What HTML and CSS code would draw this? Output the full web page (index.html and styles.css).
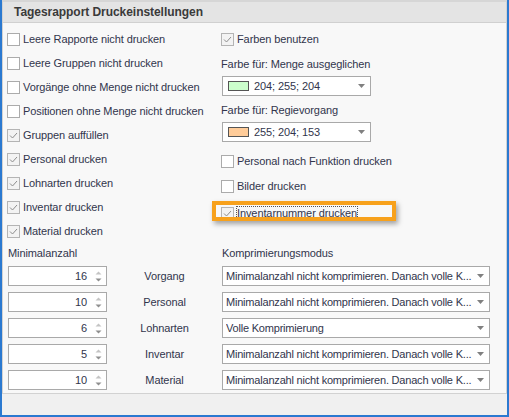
FILE: index.html
```html
<!DOCTYPE html>
<html>
<head>
	<meta charset="utf-8">
	<title>Tagesrapport Druckeinstellungen</title>
	<link rel="stylesheet" href="styles.css">
</head>
<body>
<div class="window">
	<div class="group">
		<div class="group-head">Tagesrapport Druckeinstellungen</div>
		<div class="group-body">

			<div class="options">
				<div class="col left">
					<label class="chk"><span class="box"></span>Leere Rapporte nicht drucken</label>
					<label class="chk"><span class="box"></span>Leere Gruppen nicht drucken</label>
					<label class="chk"><span class="box"></span>Vorgänge ohne Menge nicht drucken</label>
					<label class="chk"><span class="box"></span>Positionen ohne Menge nicht drucken</label>
					<label class="chk on"><span class="box"><svg viewBox="0 0 11 11"><polyline points="2,5.5 4.5,8 9,3"/></svg></span>Gruppen auffüllen</label>
					<label class="chk on"><span class="box"><svg viewBox="0 0 11 11"><polyline points="2,5.5 4.5,8 9,3"/></svg></span>Personal drucken</label>
					<label class="chk on"><span class="box"><svg viewBox="0 0 11 11"><polyline points="2,5.5 4.5,8 9,3"/></svg></span>Lohnarten drucken</label>
					<label class="chk on"><span class="box"><svg viewBox="0 0 11 11"><polyline points="2,5.5 4.5,8 9,3"/></svg></span>Inventar drucken</label>
					<label class="chk on"><span class="box"><svg viewBox="0 0 11 11"><polyline points="2,5.5 4.5,8 9,3"/></svg></span>Material drucken</label>
				</div>

				<div class="col right">
					<label class="chk on"><span class="box"><svg viewBox="0 0 11 11"><polyline points="2,5.5 4.5,8 9,3"/></svg></span>Farben benutzen</label>

					<div class="cap first">Farbe für: Menge ausgeglichen</div>
					<div class="combo color">
						<span class="swatch green"></span><span class="val">204; 255; 204</span>
						<svg class="arrow" viewBox="0 0 7 4"><polygon points="0,0 7,0 3.5,4"/></svg>
					</div>

					<div class="cap">Farbe für: Regievorgang</div>
					<div class="combo color">
						<span class="swatch orange"></span><span class="val">255; 204; 153</span>
						<svg class="arrow" viewBox="0 0 7 4"><polygon points="0,0 7,0 3.5,4"/></svg>
					</div>

					<label class="chk funk"><span class="box"></span>Personal nach Funktion drucken</label>
					<label class="chk pics"><span class="box"></span>Bilder drucken</label>
					<label class="chk on inv"><span class="box"><svg viewBox="0 0 11 11"><polyline points="2,5.5 4.5,8 9,3"/></svg></span><span class="focus">Inventarnummer drucken</span></label>
				</div>
			</div>

			<div class="limits">
				<div class="lim-head">Minimalanzahl</div>
				<div></div>
				<div class="lim-head">Komprimierungsmodus</div>

				<div class="spin"><span class="num">16</span><svg class="updown" viewBox="0 0 7 13"><polygon class="up" points="0.5,4.5 3.5,1.5 6.5,4.5"/><polygon class="down" points="0.5,8.5 6.5,8.5 3.5,11.5"/></svg></div>
				<div class="what">Vorgang</div>
				<div class="combo wide"><span class="val">Minimalanzahl nicht komprimieren. Danach volle K...</span><svg class="arrow" viewBox="0 0 7 4"><polygon points="0,0 7,0 3.5,4"/></svg></div>

				<div class="spin"><span class="num">10</span><svg class="updown" viewBox="0 0 7 13"><polygon class="up" points="0.5,4.5 3.5,1.5 6.5,4.5"/><polygon class="down" points="0.5,8.5 6.5,8.5 3.5,11.5"/></svg></div>
				<div class="what">Personal</div>
				<div class="combo wide"><span class="val">Minimalanzahl nicht komprimieren. Danach volle K...</span><svg class="arrow" viewBox="0 0 7 4"><polygon points="0,0 7,0 3.5,4"/></svg></div>

				<div class="spin"><span class="num">6</span><svg class="updown" viewBox="0 0 7 13"><polygon class="up" points="0.5,4.5 3.5,1.5 6.5,4.5"/><polygon class="down" points="0.5,8.5 6.5,8.5 3.5,11.5"/></svg></div>
				<div class="what">Lohnarten</div>
				<div class="combo wide"><span class="val">Volle Komprimierung</span><svg class="arrow" viewBox="0 0 7 4"><polygon points="0,0 7,0 3.5,4"/></svg></div>

				<div class="spin"><span class="num">5</span><svg class="updown" viewBox="0 0 7 13"><polygon class="up" points="0.5,4.5 3.5,1.5 6.5,4.5"/><polygon class="down" points="0.5,8.5 6.5,8.5 3.5,11.5"/></svg></div>
				<div class="what">Inventar</div>
				<div class="combo wide"><span class="val">Minimalanzahl nicht komprimieren. Danach volle K...</span><svg class="arrow" viewBox="0 0 7 4"><polygon points="0,0 7,0 3.5,4"/></svg></div>

				<div class="spin"><span class="num">10</span><svg class="updown" viewBox="0 0 7 13"><polygon class="up" points="0.5,4.5 3.5,1.5 6.5,4.5"/><polygon class="down" points="0.5,8.5 6.5,8.5 3.5,11.5"/></svg></div>
				<div class="what">Material</div>
				<div class="combo wide"><span class="val">Minimalanzahl nicht komprimieren. Danach volle K...</span><svg class="arrow" viewBox="0 0 7 4"><polygon points="0,0 7,0 3.5,4"/></svg></div>
			</div>

		</div>
	</div>
	<div class="marker"></div>
</div>
</body>
</html>
```

FILE: styles.css
```css
* {
	box-sizing: border-box;
}
body {
	margin: 0px;
	background: #f0f0f0;
	font-family: 'Liberation Sans', Arial, sans-serif;
	font-size: 11px;
	letter-spacing: -0.1px;
	color: #31354c;
}
.window {
	position: relative;
	width: 509px;
	height: 417px;
	background: #f0f0f0;
	border-left: 2px solid #2b79d0;
	border-right: 2px solid #2b79d0;
	border-bottom: 2px solid #2b79d0;
}
.group {
	border: 1px solid #d2d2d2;
	border-top: 2px solid #d6d6d6;
	background: #f8f8f8;
}
.group-head {
	height: 21px;
	background: #e4e4e4;
	border-bottom: 1px solid #d0d0d0;
	padding: 3px 0 0 11px;
	font-weight: bold;
	font-size: 12px;
	letter-spacing: -0.05px;
	color: #3a3a3a;
}
.group-body {
	height: 370px;
	padding: 4px 0 0 4px;
}

/* upper part: two columns of options */
.options {
	display: flex;
}
.col {
	display: flex;
	flex-direction: column;
}
.col.left {
	width: 214px;
}
.chk {
	display: flex;
	align-items: center;
	height: 24px;
	white-space: nowrap;
}
.chk .box {
	width: 13px;
	height: 13px;
	margin-right: 3px;
	border: 1px solid #ababab;
	background: #fff;
	display: flex;
}
.chk.on .box {
	background: #f3f3f3;
	border-color: #b4b4b4;
}
.chk .box svg {
	width: 11px;
	height: 11px;
}
.chk .box polyline {
	fill: none;
	stroke: #8e8e8e;
	stroke-width: 1;
}
.cap {
	height: 16px;
	line-height: 16px;
	margin-top: 6px;
}
.cap.first {
	margin-top: 5px;
}
.chk.funk {
	margin-top: 7px;
}
.chk.pics {
	margin-top: 1px;
}
.chk.inv {
	margin-top: 3px;
}
.focus {
	outline: 1px dotted #555;
	line-height: 13px;
}

/* combo boxes */
.combo {
	display: flex;
	align-items: center;
	height: 20px;
	background: #fff;
	border: 1px solid #a9a9a9;
	margin-top: 4px;
	padding: 0 5px 0 3px;
}
.combo.color {
	width: 149px;
	margin-left: 1px;
	padding-left: 5px;
}
.combo .val {
	flex: 1;
	min-width: 0;
	overflow: hidden;
	white-space: nowrap;
}
.combo .arrow {
	flex: none;
	width: 7px;
	height: 4px;
	fill: #808080;
	margin-left: 4px;
}
.combo.wide {
	margin-top: 0px;
}
.combo.wide .val {
	letter-spacing: -0.2px;
}
.swatch {
	width: 21px;
	height: 10px;
	border: 1px solid #555;
	margin-right: 5px;
}
.swatch.green {
	background: rgb(204, 255, 204);
}
.swatch.orange {
	background: rgb(255, 204, 153);
}

/* lower part: minimal counts and compression modes */
.limits {
	display: grid;
	grid-template-columns: 99px 115px 268px;
	row-gap: 6px;
	margin-top: 2px;
	padding-left: 1px;
}
.lim-head {
	height: 16px;
	line-height: 16px;
	margin-bottom: -1px;
}
.spin {
	display: flex;
	align-items: center;
	height: 20px;
	background: #fff;
	border: 1px solid #a9a9a9;
	padding: 0 4px 0 0;
}
.spin .num {
	flex: 1;
	text-align: right;
	padding-right: 8px;
}
.spin .updown {
	width: 7px;
	height: 13px;
}
.updown .up {
	fill: #c4c4c4;
}
.updown .down {
	fill: #8f8f8f;
}
.what {
	display: flex;
	align-items: center;
	justify-content: center;
}

/* orange call-out frame over the Inventarnummer option */
.marker {
	position: absolute;
	left: 210px;
	top: 201px;
	width: 184px;
	height: 20px;
	border: 4px solid #f7a11c;
	box-shadow: 2px 3px 5px rgba(0, 0, 0, 0.35);
}
```
